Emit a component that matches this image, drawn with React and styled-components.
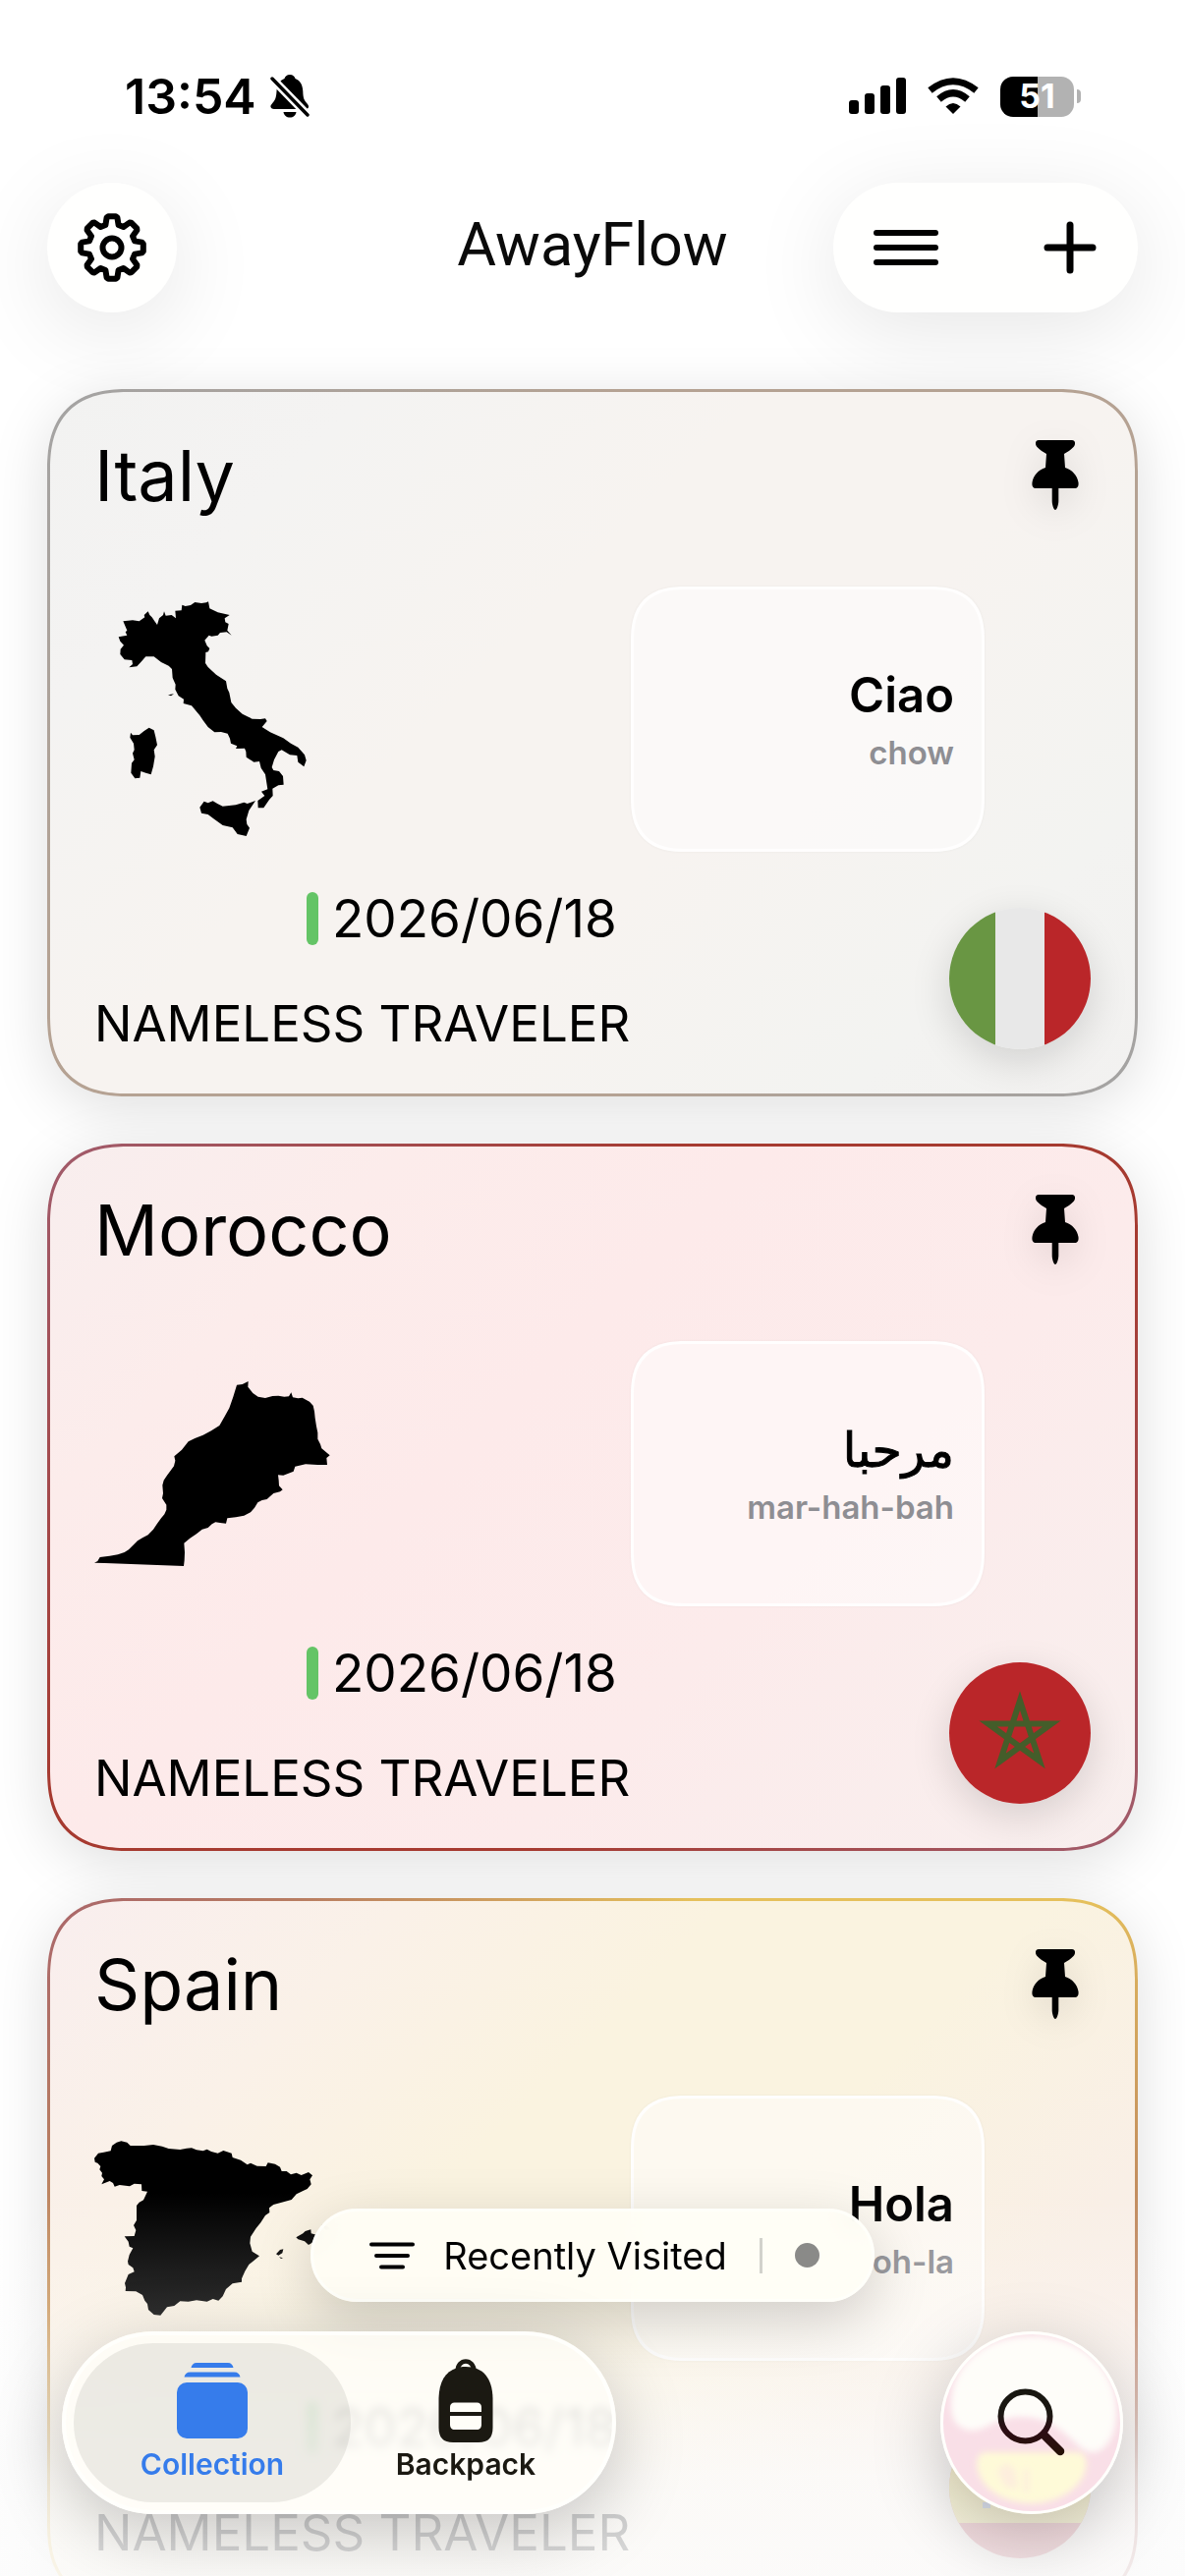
import React from "react";
import styled, { createGlobalStyle, css } from "styled-components";

const sans = `Inter, "Liberation Sans", "DejaVu Sans", sans-serif`;

const GlobalStyle = createGlobalStyle`
  *, *::before, *::after { box-sizing: border-box; }
  body { margin: 0; background: #fff; color: #000; font-family: ${sans}; }
  h1, h2, p, ul { margin: 0; padding: 0; }
  button { border: 0; padding: 0; background: none; color: inherit; font: inherit; cursor: pointer; }
  svg { display: block; flex: none; }
`;

const Screen = styled.div`
  position: relative;
  display: flex;
  flex-direction: column;
  height: 100vh;
  overflow: hidden;
  background: #fff;
`;

/* ---------- status bar ---------- */

const StatusBar = styled.div`
  display: flex;
  justify-content: space-between;
  align-items: center;
  flex: none;
  height: 60px;
  margin: 68px 106px 58px 127px;
`;

const StatusGroup = styled.div`
  display: flex;
  align-items: center;
  gap: ${(p) => p.$gap}px;
`;

const Clock = styled.span`
  font-size: 50px;
  line-height: 60px;
  font-weight: 600;
`;

const Battery = styled.span`
  display: flex;
  align-items: center;
  gap: 3px;
  &::after {
    content: "";
    width: 4px;
    height: 14px;
    border-radius: 0 6px 6px 0;
    background: #b2b2b2;
  }
`;

const BatteryBody = styled.span`
  display: grid;
  place-items: center;
  width: 75px;
  height: 41px;
  border-radius: 13px;
  background: linear-gradient(90deg, #000 ${(p) => p.$level}%, #b2b2b2 ${(p) => p.$level}%);
  color: #fff;
  font-size: 34px;
  line-height: 40px;
  font-weight: 700;
`;

/* ---------- header ---------- */

const Header = styled.header`
  display: grid;
  grid-template-columns: 1fr auto 1fr;
  align-items: center;
  flex: none;
  padding: 0 48px;
`;

const Brand = styled.h1`
  padding-bottom: 6px;
  font-family: Roboto, "Liberation Sans", sans-serif;
  font-size: 61px;
  line-height: 72px;
  font-weight: 400;
  color: #0a0a0a;
`;

const Glass = styled.div`
  display: flex;
  align-items: center;
  justify-content: space-between;
  width: ${(p) => p.$width}px;
  height: 132px;
  border-radius: 66px;
  background: #fffffe;
  box-shadow: 0 18px 90px rgba(0, 0, 0, 0.1);
  justify-self: ${(p) => p.$side};
`;

const ToolButton = styled.button`
  display: grid;
  place-items: center;
  width: ${(p) => p.$width}px;
  height: 132px;
`;

/* ---------- cards ---------- */

const List = styled.main`
  flex: 1;
  min-height: 0;
  display: flex;
  flex-direction: column;
  gap: 48px;
  padding: 78px 48px 48px;
  overflow-y: auto;
  scrollbar-width: none;
`;

const themes = {
  italy: css`
    background:
      linear-gradient(135deg, #f2f2f1 0%, #f4f3f2 18%, #f7f3f0 40%, #f7f3f0 60%, #f3f3f1 84%, #f2f1f0 100%) padding-box,
      linear-gradient(135deg, #a3a3a3 0%, #b5a293 32%, #b5a293 70%, #a3a3a3 100%) border-box;
  `,
  morocco: css`
    background:
      linear-gradient(135deg, #f8eeee 0%, #fceceb 20%, #fdeaea 40%, #fcebeb 65%, #f8efee 100%) padding-box,
      linear-gradient(135deg, #a15c6c 0%, #a63a30 36%, #a63a30 66%, #a15c6c 100%) border-box;
  `,
  spain: css`
    background:
      linear-gradient(135deg, #f9eeee 0%, #faf1e8 20%, #faf3e0 38%, #faf3e0 56%, #f9efe6 76%, #f9efed 100%) padding-box,
      linear-gradient(135deg, #a9656a 0%, #b87d62 14%, #e5c05c 36%, #e5c05c 58%, #c48f5e 76%, #a9656a 100%) border-box;
  `,
};

const Card = styled.article`
  flex: none;
  display: flex;
  flex-direction: column;
  padding: 45px;
  border: 3px solid transparent;
  border-radius: 70px;
  box-shadow: 0 12px 60px rgba(0, 0, 0, 0.13);
  ${(p) => themes[p.$theme]}
  @supports (corner-shape: superellipse(1.35)) {
    border-radius: 84px;
    corner-shape: superellipse(1.35);
  }
`;

const CardHead = styled.div`
  display: flex;
  justify-content: space-between;
  align-items: center;
  height: 80px;
`;

const Country = styled.h2`
  font-size: 72px;
  line-height: 80px;
  font-weight: 400;
`;

const PinButton = styled.button`
  width: 72px;
  height: 80px;
  display: grid;
  place-items: center;
  filter: drop-shadow(0 12px 18px rgba(0, 0, 0, 0.1));
`;

const CardBody = styled.div`
  display: flex;
  justify-content: space-between;
  align-items: center;
  margin: 73px 108px 41px 0;
`;

const Phrase = styled.div`
  display: flex;
  flex-direction: column;
  justify-content: center;
  align-items: flex-end;
  gap: 8px;
  width: 360px;
  height: 270px;
  padding: 0 28px;
  border: 3px solid rgba(255, 255, 255, 0.85);
  border-radius: 46px;
  background: rgba(255, 255, 255, 0.5);
  box-shadow: 0 0 3px rgba(0, 0, 0, 0.05);
  @supports (corner-shape: superellipse(1.35)) {
    border-radius: 56px;
    corner-shape: superellipse(1.35);
  }
`;

const Greeting = styled.p`
  font-family: Inter, "DejaVu Sans", sans-serif;
  font-size: 49px;
  line-height: 60px;
  font-weight: 600;
  &:lang(ar) {
    font-weight: 400;
    -webkit-text-stroke: 1px currentColor;
  }
`;

const Sound = styled.p`
  font-size: 33px;
  line-height: 40px;
  font-weight: 600;
  color: #8e8e93;
`;

const CardFoot = styled.div`
  display: flex;
  justify-content: space-between;
  align-items: flex-end;
`;

const Details = styled.div`
  display: flex;
  flex-direction: column;
  gap: 54px;
`;

const Visit = styled.div`
  display: flex;
  align-items: center;
  gap: 14px;
  margin-left: 216px;
  font-size: 53px;
  line-height: 54px;
  &::before {
    content: "";
    width: 12px;
    height: 54px;
    border-radius: 6px;
    background: #64c466;
  }
`;

const Traveler = styled.p`
  font-size: 51px;
  line-height: 52px;
`;

const FlagDisc = styled.div`
  width: 144px;
  height: 144px;
  border-radius: 50%;
  overflow: hidden;
  box-shadow: 0 12px 42px rgba(0, 0, 0, 0.14);
`;

/* ---------- floating controls ---------- */

const Fade = styled.div`
  position: absolute;
  inset: auto 0 0 0;
  height: 390px;
  pointer-events: none;
  background: linear-gradient(
    180deg,
    rgba(255, 255, 255, 0) 0%,
    rgba(253, 253, 253, 0.17) 30%,
    rgba(252, 252, 252, 0.48) 52%,
    rgba(252, 252, 252, 0.78) 74%,
    rgba(252, 252, 252, 0.88) 100%
  );
`;

const Dock = styled.div`
  position: absolute;
  inset: auto 63px 63px 63px;
  display: flex;
  flex-direction: column;
  gap: 30px;
`;

const SortPill = styled.button`
  align-self: center;
  display: flex;
  align-items: center;
  height: 95px;
  padding: 0 53px 0 57px;
  border: 3px solid #fffffa;
  border-radius: 48px;
  background: rgba(255, 254, 246, 0.88);
  backdrop-filter: blur(12px);
  box-shadow: 0 18px 60px rgba(0, 0, 0, 0.18);
  font-size: 38px;
  line-height: 48px;
`;

const SortLabel = styled.span`
  margin: 0 33px 0 29px;
`;

const Divider = styled.span`
  width: 3px;
  height: 36px;
  margin-right: 33px;
  background: #d2d2cc;
`;

const Dot = styled.span`
  width: 25px;
  height: 25px;
  border-radius: 50%;
  background: #8a8a88;
`;

const DockRow = styled.div`
  display: flex;
  justify-content: space-between;
`;

const TabBar = styled.nav`
  display: flex;
  padding: 8px;
  border: 4px solid #fffffc;
  border-radius: 93px;
  background: rgba(255, 254, 248, 0.76);
  backdrop-filter: blur(5px);
  box-shadow: 0 18px 72px rgba(0, 0, 0, 0.22);
`;

const Tab = styled.button`
  display: flex;
  flex-direction: column;
  align-items: center;
  justify-content: flex-end;
  gap: 4px;
  width: 282px;
  height: 162px;
  padding-bottom: 21px;
  border-radius: 81px;
  background: ${(p) => (p.$active ? "rgba(50, 50, 40, 0.085)" : "transparent")};
  color: ${(p) => (p.$active ? "#367ceb" : "#1b1912")};
  font-size: 30px;
  line-height: 36px;
  font-weight: 600;
  & + & {
    margin-left: -24px;
  }
`;

const TabIcon = styled.span`
  display: grid;
  place-items: center;
  height: 85px;
`;

const SearchButton = styled.button`
  display: grid;
  place-items: center;
  width: 186px;
  height: 186px;
  border-radius: 50%;
  box-shadow: 0 18px 72px rgba(0, 0, 0, 0.22);
`;

/* ---------- drawings ---------- */

const gearPath = (() => {
  const pts = [];
  for (let i = 0; i < 8; i += 1) {
    [[-16, 24], [-10, 31], [-7, 32], [7, 32], [10, 31], [16, 24]].forEach(([a, r]) => {
      const t = ((i * 45 + a - 90) * Math.PI) / 180;
      pts.push(`${(36 + r * Math.cos(t)).toFixed(1)} ${(36 + r * Math.sin(t)).toFixed(1)}`);
    });
  }
  return `M${pts.join("L")}Z`;
})();

const GearIcon = () => (
  <svg width="72" height="72" viewBox="0 0 72 72" fill="none" stroke="#000" strokeWidth="6" strokeLinejoin="round" aria-hidden="true">
    <path d={gearPath} />
    <circle cx="36" cy="36" r="9.5" />
  </svg>
);

const MenuIcon = () => (
  <svg width="66" height="36" viewBox="0 0 66 36" stroke="#000" strokeWidth="6" strokeLinecap="round" aria-hidden="true">
    <path d="M3 3H63M3 18H63M3 33H63" />
  </svg>
);

const PlusIcon = () => (
  <svg width="54" height="54" viewBox="0 0 54 54" stroke="#000" strokeWidth="7" strokeLinecap="round" aria-hidden="true">
    <path d="M27 4V50M4 27H50" />
  </svg>
);

const BellOffIcon = () => (
  <svg width="40" height="44" viewBox="0 0 40 44" aria-hidden="true">
    <path d="M20 0C23 0 25 2 25.500 4C31 6 33 11 33.300 17C33.500 24 34.500 26 38 30C40 32.500 39 35 36 35H4C1 35 -1 32.500 1.500 30C5 26 6 24 6.500 17C7 11 9 6 14.500 4C15 2 17 0 20 0Z" />
    <path d="M13.500 38H26.500C26 41.500 23.500 43.500 20 43.500C16.500 43.500 14 41.500 13.500 38Z" />
    <path d="M2 4L38 41" stroke="#fff" strokeWidth="8.500" />
    <path d="M2 4L38 41" stroke="#000" strokeWidth="3.400" strokeLinecap="round" />
  </svg>
);

const SignalIcon = () => (
  <svg width="58" height="38" viewBox="0 0 58 38" aria-hidden="true">
    <rect x="0" y="23" width="10" height="14" rx="3" />
    <rect x="16" y="16" width="10" height="21" rx="3" />
    <rect x="32" y="8" width="10" height="29" rx="3" />
    <rect x="48" y="0" width="10" height="37" rx="3" />
  </svg>
);

const WifiIcon = () => (
  <svg width="52" height="38" viewBox="0 0 52 38" aria-hidden="true">
    <path d="M26 37L18.500 29.500Q26 22.500 33.500 29.500Z" strokeLinejoin="round" />
    <path d="M11.500 22Q26 9.500 40.500 22" fill="none" stroke="#000" strokeWidth="7" />
    <path d="M2.500 13Q26 -5.500 49.500 13" fill="none" stroke="#000" strokeWidth="7" />
  </svg>
);

const PinIcon = () => (
  <svg width="48" height="72" viewBox="0 0 48 72" aria-hidden="true">
    <path d="M7 0H41C44.500 0 45 4.500 42.500 7C40 10 36 12 33 14L34 28C41 30 46.500 36 47.500 43C48 47 46.500 49 43.500 49H27.300V62C27.300 66 25.500 71 24 71C22.500 71 20.700 66 20.700 62V49H4.500C1.500 49 0 47 0.500 43C1.500 36 7 30 14 28L15 14C12 12 8 10 5.500 7C3 4.500 3.500 0 7 0Z" />
  </svg>
);

const SortIcon = () => (
  <svg width="46" height="28" viewBox="0 0 46 28" stroke="#000" strokeWidth="4" strokeLinecap="round" aria-hidden="true">
    <path d="M2 2.500H44M7 14H39M12 25.500H34" />
  </svg>
);

const StackIcon = () => (
  <svg width="72" height="77" viewBox="0 0 72 77" fill="currentColor" aria-hidden="true">
    <path d="M14.500 5C15 2 17 0 20 0H52C55 0 57 2 57.500 5Z" />
    <path d="M7.500 14.500C8 11.500 10 9.500 13.500 9.500H58.500C62 9.500 64 11.500 64.500 14.500Z" />
    <rect x="0" y="20" width="72" height="57" rx="10" />
  </svg>
);

const BackpackIcon = () => (
  <svg width="56" height="85" viewBox="0 0 56 85" aria-hidden="true">
    <path d="M19.500 13C19.500 -1 36.500 -1 36.500 13" fill="none" stroke="currentColor" strokeWidth="4.500" />
    <path d="M28 8C46 8 55 20 55.500 40V70C55.500 80 51 85 41 85H15C5 85 0.500 80 0.500 70V40C1 20 10 8 28 8Z" fill="currentColor" />
    <path d="M12 54V49C12 46 14 44.500 16.500 44.500H39.500C42 44.500 44 46 44 49V54ZM12 58H44V67C44 70 42 72 39.500 72H16.500C14 72 12 70 12 67Z" fill="#fffef8" />
  </svg>
);

const SearchLens = () => (
  <svg width="186" height="186" viewBox="0 0 186 186" aria-hidden="true">
    <defs>
      <clipPath id="lens"><circle cx="93" cy="93" r="91" /></clipPath>
      <filter id="soft" x="-20%" y="-20%" width="140%" height="140%"><feGaussianBlur stdDeviation="3" /></filter>
      <linearGradient id="ink" x1="0" y1="58" x2="0" y2="128" gradientUnits="userSpaceOnUse">
        <stop offset="0" stopColor="#17160f" />
        <stop offset="0.36" stopColor="#1c1813" />
        <stop offset="0.62" stopColor="#2d0d14" />
        <stop offset="1" stopColor="#241105" />
      </linearGradient>
    </defs>
    <circle cx="93" cy="93" r="92" fill="#f9dfe7" />
    <g clipPath="url(#lens)">
      <path d="M11 76C11 30 48 5 93 5C138 5 179 34 179 82C179 104 170 122 155 123C136 123 128 88 82 87C58 87 46 101 32 101C18 100 11 90 11 76Z" fill="#fefdf9" filter="url(#soft)" />
      <path d="M48 123H138C147 123 150 130 148 140C143 160 120 175 93 175C66 175 43 162 38 141C36 131 38 123 48 123Z" fill="#fefad8" filter="url(#soft)" />
      <path d="M58 142l9 -8 9 6 3 20 -13 -2zM85 140h5v24h-5z" fill="#fdeedd" filter="url(#soft)" />
    </g>
    <circle cx="93" cy="93" r="91.500" fill="none" stroke="#fffffc" strokeWidth="3" />
    <g fill="none" stroke="url(#ink)" strokeLinecap="round">
      <circle cx="86.500" cy="86.500" r="25" strokeWidth="6" />
      <path d="M106 106L122 122" strokeWidth="8.500" />
    </g>
  </svg>
);

const shapes = {
  italy: {
    viewBox: "168 696 720 720",
    d: "M256 757L285 754 305 757 322 745 320 738 332 727 337 738 344 745 352 757 360 768 366 748 378 738 381 727 386 740 404 738 417 748 415 725 434 724 436 707 446 711 462 708 475 699 495 702 510 700 516 697 520 718 545 730 581 738 566 748 568 760 578 765 574 785 587 800 572 790 552 792 545 800 526 803 518 800 505 815 512 832 520 840 516 850 508 852 507 885 515 897 540 920 570 940 574 962 580 975 586 1005 600 1022 620 1040 635 1048 650 1055 675 1056 690 1054 695 1062 680 1080 705 1096 745 1114 768 1130 790 1142 810 1165 815 1182 808 1201 790 1187 787 1167 765 1165 740 1150 730 1155 717 1180 710 1203 715 1212 732 1215 744 1230 746 1256 730 1258 712 1268 713 1290 702 1302 685 1327 668 1327 667 1305 688 1290 678 1277 697 1270 690 1225 677 1205 672 1185 655 1187 632 1172 631 1155 627 1145 600 1146 604 1138 585 1130 582 1115 575 1100 555 1095 535 1096 515 1080 500 1060 490 1045 465 1015 440 1008 441 995 425 985 415 965 416 950 407 930 405 903 395 893 372 882 350 865 325 865 312 880 298 895 274 898 285 888 283 876 260 874 247 858 248 842 258 830 247 818 242 805 268 800 263 790 268 785ZM279 1097L285 1105 305 1104 320 1092 335 1082 350 1090 355 1110 360 1135 350 1150 353 1170 348 1200 341 1225 325 1220 310 1215 307 1235 292 1237 280 1220 282 1190 290 1180 285 1160 290 1150 288 1130 277 1112ZM490 1325L503 1307 515 1312 530 1306 545 1315 560 1322 600 1318 625 1310 635 1314 660 1305 650 1320 640 1335 632 1362 634 1377 642 1388 632 1413 605 1407 590 1387 560 1380 535 1362 515 1347 495 1343ZM393 982L411 979 402 985Z",
  },
  morocco: {
    viewBox: "168 120 720 720",
    d: "M168 752L178 747 185 735 215 731 240 727 260 720 273 712 285 700 300 685 315 676 332 667 348 650 360 632 372 616 382 604 388 590 388 575 375 555 378 540 376 515 380 500 390 485 400 472 411 457 415 440 412 427 435 407 455 382 475 372 500 362 525 349 550 333 565 307 580 280 592 245 603 209 620 207 638 198 637 215 652 234 668 245 690 249 712 243 730 242 748 245 762 244 769 232 774 247 790 250 803 248 825 260 836 272 840 290 842 310 846 335 850 355 850 374 858 390 862 403 887 424 877 432 879 453 850 453 813 451 781 458 776 473 745 485 729 484 731 500 732 517 743 529 735 535 715 540 695 558 680 561 667 568 657 584 645 598 625 608 600 613 574 616 570 632 552 630 538 628 527 634 515 645 497 650 480 664 460 677 442 692 444 720 443 745 441 762 300 757 200 753Z",
  },
  spain: {
    viewBox: "168 744 720 720",
    d: "M168 890L180 875 197 872 218 868 222 852 236 842 250 838 268 842 278 852 320 852 348 849 375 854 395 861 430 864 450 860 465 859 480 865 500 868 512 863 525 870 545 875 562 867 587 875 590 888 615 896 635 910 645 905 665 914 692 915 698 904 720 908 735 917 740 930 755 930 768 940 785 935 800 942 822 933 834 943 826 955 830 970 818 984 805 990 785 1000 770 1017 740 1025 715 1032 702 1042 703 1056 690 1065 676 1087 662 1104 645 1130 643 1150 650 1175 672 1189 655 1203 640 1215 628 1235 618 1258 618 1268 590 1273 570 1290 560 1312 547 1325 530 1320 512 1328 480 1324 455 1328 430 1327 412 1341 390 1345 370 1370 350 1368 333 1353 330 1335 322 1325 315 1308 295 1297 263 1296 264 1285 261 1272 272 1245 290 1237 286 1225 272 1215 270 1205 275 1185 286 1165 275 1160 272 1145 260 1129 290 1128 295 1110 288 1095 297 1080 297 1035 305 1025 318 1018 330 992 313 990 312 970 290 968 276 976 245 972 230 977 225 966 215 960 190 970 198 955 190 945 192 935 184 925 187 915 178 905 170 902ZM784 1132L805 1120 812 1113 829 1108 830 1120 848 1125 838 1145 822 1155 810 1144 790 1138ZM723 1183L735 1170 745 1168 742 1180 730 1187ZM732 1192L744 1195 738 1197ZM862 1094L880 1098 888 1108 876 1110Z",
  },
};

const CountryShape = ({ id }) => (
  <svg width="240" height="240" viewBox={shapes[id].viewBox} aria-hidden="true">
    <path d={shapes[id].d} />
  </svg>
);

const flags = {
  italy: (
    <>
      <path d="M0 0H47V144H0Z" fill="#699643" />
      <path d="M47 0H97V144H47Z" fill="#e8e8e8" />
      <path d="M97 0H144V144H97Z" fill="#ba2629" />
    </>
  ),
  morocco: (
    <>
      <path d="M0 0H144V144H0Z" fill="#ba2629" />
      <path d="M72 39L92 100.500 39.700 62.500H104.300L52 100.500Z" fill="none" stroke="#445d2a" strokeWidth="6" />
    </>
  ),
  spain: (
    <>
      <path d="M0 0H144V144H0Z" fill="#b02a3c" />
      <path d="M0 36H144V108H0Z" fill="#d9c33c" />
      <path d="M36 52H56V84H36Z" fill="#ba5a3a" />
      <path d="M34 87H42V93H34Z" fill="#5b78b8" />
    </>
  ),
};

const Flag = ({ id, name }) => (
  <FlagDisc>
    <svg width="144" height="144" viewBox="0 0 144 144" role="img" aria-label={`Flag of ${name}`}>
      {flags[id]}
    </svg>
  </FlagDisc>
);

const trips = [
  { id: "italy", name: "Italy", greeting: "Ciao", lang: "it", sound: "chow" },
  { id: "morocco", name: "Morocco", greeting: "مرحبا", lang: "ar", sound: "mar-hah-bah" },
  { id: "spain", name: "Spain", greeting: "Hola", lang: "es", sound: "oh-la" },
];

const TripCard = ({ trip }) => (
  <Card $theme={trip.id}>
    <CardHead>
      <Country>{trip.name}</Country>
      <PinButton type="button" aria-label={`Unpin ${trip.name}`}>
        <PinIcon />
      </PinButton>
    </CardHead>
    <CardBody>
      <CountryShape id={trip.id} />
      <Phrase>
        <Greeting lang={trip.lang}>{trip.greeting}</Greeting>
        <Sound>{trip.sound}</Sound>
      </Phrase>
    </CardBody>
    <CardFoot>
      <Details>
        <Visit>
          <time dateTime="2026-06-18">2026/06/18</time>
        </Visit>
        <Traveler>NAMELESS TRAVELER</Traveler>
      </Details>
      <Flag id={trip.id} name={trip.name} />
    </CardFoot>
  </Card>
);

export default function App() {
  return (
    <Screen>
      <GlobalStyle />
      <StatusBar>
        <StatusGroup $gap={14}>
          <Clock>13:54</Clock>
          <BellOffIcon />
        </StatusGroup>
        <StatusGroup $gap={22}>
          <SignalIcon />
          <WifiIcon />
          <Battery>
            <BatteryBody $level={51}>51</BatteryBody>
          </Battery>
        </StatusGroup>
      </StatusBar>
      <Header>
        <Glass $width={132} $side="start">
          <ToolButton type="button" $width={132} aria-label="Settings">
            <GearIcon />
          </ToolButton>
        </Glass>
        <Brand>AwayFlow</Brand>
        <Glass $width={310} $side="end">
          <ToolButton type="button" $width={148} aria-label="Menu">
            <MenuIcon />
          </ToolButton>
          <ToolButton type="button" $width={138} aria-label="Add">
            <PlusIcon />
          </ToolButton>
        </Glass>
      </Header>
      <List>
        {trips.map((trip) => (
          <TripCard key={trip.id} trip={trip} />
        ))}
      </List>
      <Fade />
      <Dock>
        <SortPill type="button">
          <SortIcon />
          <SortLabel>Recently Visited</SortLabel>
          <Divider />
          <Dot />
        </SortPill>
        <DockRow>
          <TabBar>
            <Tab type="button" $active>
              <TabIcon>
                <StackIcon />
              </TabIcon>
              Collection
            </Tab>
            <Tab type="button">
              <TabIcon>
                <BackpackIcon />
              </TabIcon>
              Backpack
            </Tab>
          </TabBar>
          <SearchButton type="button" aria-label="Search">
            <SearchLens />
          </SearchButton>
        </DockRow>
      </Dock>
    </Screen>
  );
}
